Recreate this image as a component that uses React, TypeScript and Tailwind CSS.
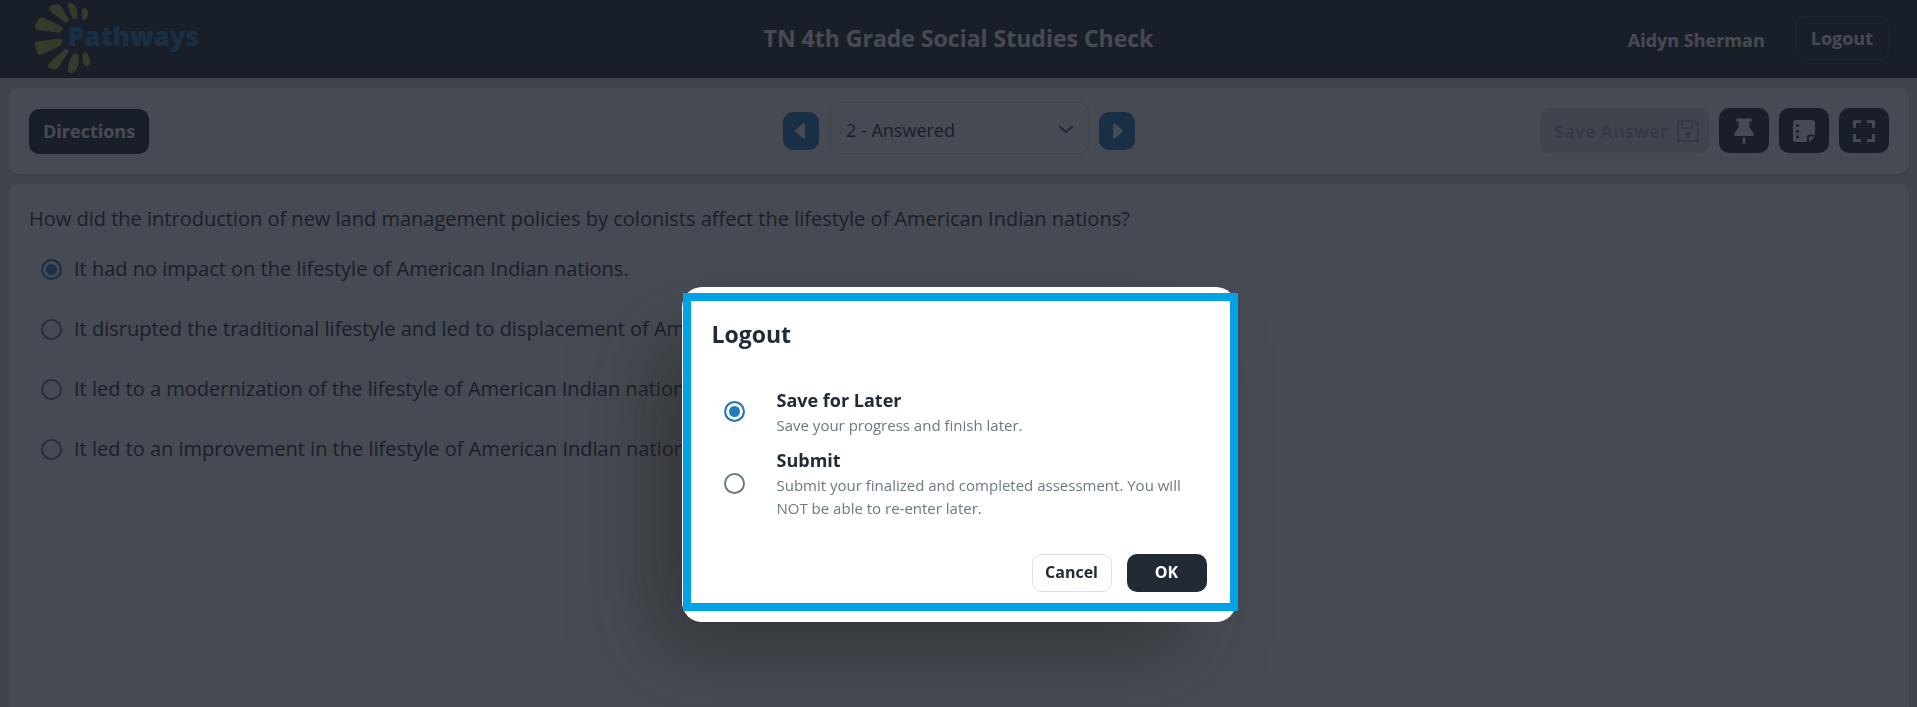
import React, { useState } from 'react';

const answers = [
  'It had no impact on the lifestyle of American Indian nations.',
  'It disrupted the traditional lifestyle and led to displacement of American Indian nations.',
  'It led to a modernization of the lifestyle of American Indian nations.',
  'It led to an improvement in the lifestyle of American Indian nations.',
];

const logoutOptions = [
  { id: 'save', label: 'Save for Later', description: 'Save your progress and finish later.' },
  {
    id: 'submit',
    label: 'Submit',
    description: 'Submit your finalized and completed assessment. You will NOT be able to re-enter later.',
  },
];

const radioClass =
  'size-[21px] shrink-0 appearance-none rounded-full border-2 border-[#6b7885] bg-white shadow-[inset_0_0_0_3px_white] checked:border-[#2279bc] checked:bg-[#2279bc]';

const toolClass = 'flex h-[45px] w-[50px] items-center justify-center rounded-[10px] bg-[#222b35] text-white';

function Logo() {
  return (
    <svg viewBox="34 2 166 72" className="h-[72px] w-[166px]" role="img" aria-label="Pathways">
      <g fill="#a2ba3c" stroke="#a2ba3c" strokeWidth="1" strokeLinejoin="round">
        <path d="M49 9Q50 5 55 5Q59 4 61 7L68 19Q69 23 65 22L52 12Q49 10 49 9z" />
        <path d="M36 25L39 19Q40 17 43 18L60 26Q63 28 62 30Q61 33 57 32L37 29Q35 29 36 25z" />
        <path d="M35 44Q35 42 38 42L59 39Q62 39 62 42Q62 44 59 46L42 54Q39 55 38 53z" />
        <path d="M48 65L64 50Q67 48 68 51Q68 53 66 55L58 67Q56 70 53 69L49 67Q48 66 48 65z" />
        <path d="M68 4Q71 2 74 5Q77 9 77 16Q76 20 73 18Q69 10 68 4z" />
        <path d="M82 10Q84 7 87 10Q89 14 85 20Q82 22 82 10z" />
        <path d="M68 71Q69 62 72 56Q75 52 78 55Q79 65 75 71Q70 74 68 71z" />
        <path d="M83 54Q85 50 87 54L90 61Q90 65 87 66Q82 66 83 54z" />
      </g>
      <text x="68" y="46" fill="#2279bc" fontFamily="Open Sans, sans-serif" fontWeight="800" fontSize="26">
        Pathways
      </text>
    </svg>
  );
}

function Header() {
  return (
    <header className="grid h-[78px] grid-cols-[1fr_auto_1fr] items-center bg-[#222b35] px-7 pb-0.5 text-white">
      <div className="pl-[6px]">
        <Logo />
      </div>
      <h1 className="text-[23px] leading-8 font-bold">TN 4th Grade Social Studies Check</h1>
      <div className="flex items-center justify-end gap-[30px]">
        <span className="pt-1 text-lg font-bold">Aidyn Sherman</span>
        <button className="h-11 rounded-[10px] border border-[#3d4651] px-[15px] text-lg font-bold">Logout</button>
      </div>
    </header>
  );
}

function SaveIcon() {
  return (
    <svg viewBox="0 0 24 24" className="size-6" fill="none" stroke="currentColor" strokeWidth="2">
      <path d="M3 2h14.500l4.500 4.500V21a1 1 0 0 1-1 1H3a1 1 0 0 1-1-1V3a1 1 0 0 1 1-1z" strokeLinejoin="round" />
      <path d="M6 2v7h10V2" />
      <circle cx="12.500" cy="15.500" r="3" fill="currentColor" stroke="none" />
    </svg>
  );
}

function PinIcon() {
  return (
    <svg viewBox="0 0 20 26" className="h-[26px] w-5" fill="currentColor">
      <path d="M3.500 0.500h13a1.500 1.500 0 0 1 0 3H15.500v6l3.500 4.700q2 3.800-1 3.800H2q-3 0-1-3.800L4.500 9.500v-6h-1a1.500 1.500 0 0 1 0-3z" />
      <path d="M8.500 19.500h3v5a1.500 1.500 0 0 1-3 0z" />
    </svg>
  );
}

function NoteIcon() {
  return (
    <svg viewBox="0 0 22 22" className="size-[22px]">
      <path d="M3 0h16a3 3 0 0 1 3 3v11.500h-5a3 3 0 0 0-3 3V22H3a3 3 0 0 1-3-3V3a3 3 0 0 1 3-3z" fill="currentColor" />
      <path d="M16 22v-4a1.500 1.500 0 0 1 1.500-1.500H22z" fill="currentColor" />
      <g fill="#222b35">
        <circle cx="4.500" cy="5.500" r="1.500" />
        <circle cx="4.500" cy="11.300" r="1.500" />
        <circle cx="4.500" cy="17" r="1.500" />
      </g>
    </svg>
  );
}

function FullscreenIcon() {
  return (
    <svg viewBox="0 0 22 22" className="size-[22px]" fill="none" stroke="currentColor" strokeWidth="3" strokeLinejoin="round">
      <path d="M1.500 8V1.500H8M14 1.500h6.500V8M20.500 14v6.500H14M8 20.500H1.500V14" />
    </svg>
  );
}

function Toolbar() {
  const navClass = 'mb-1 flex h-[38px] w-9 items-center justify-center rounded-[10px] bg-[#2279bc] text-white';

  return (
    <section className="grid grid-cols-[1fr_auto_1fr] items-end rounded-[10px] bg-white px-5 pt-[14px] pb-5 shadow-md">
      <div>
        <button className="block h-[45px] rounded-[10px] bg-[#222b35] px-[14px] pb-0.5 text-lg font-bold text-white">Directions</button>
      </div>

      {/* Question navigation */}
      <div className="flex items-end gap-[10px]">
        <button className={navClass} aria-label="Previous question">
          <svg viewBox="0 0 12 16" className="h-4 w-3" fill="currentColor">
            <path d="M8 .7Q10 0 10 2v12q0 2-2 1.300L.7 9Q0 8 .7 7z" />
          </svg>
        </button>
        <div className="relative">
          <select
            aria-label="Question"
            className="block h-[52px] w-[260px] appearance-none rounded-[10px] border border-[#dcdfe4] bg-white pt-1 pr-10 pl-4 text-lg text-[#222b35]"
          >
            <option>2 - Answered</option>
          </select>
          <svg
            viewBox="0 0 14 8"
            className="pointer-events-none absolute top-6 right-4 h-2 w-[14px]"
            fill="none"
            stroke="#4b5563"
            strokeWidth="2"
            strokeLinecap="round"
          >
            <path d="M1 1l6 5 6-5" />
          </svg>
        </div>
        <button className={navClass} aria-label="Next question">
          <svg viewBox="-2 0 12 16" className="h-4 w-3" fill="currentColor">
            <path d="M2 .7Q0 0 0 2v12q0 2 2 1.300L9.300 9Q10 8 9.300 7z" />
          </svg>
        </button>
      </div>

      {/* Tools */}
      <div className="flex justify-end gap-[10px] pb-px">
        <button disabled className="flex h-[45px] items-center gap-2 rounded-[10px] bg-[#e1e3e7] pr-[9px] pl-[14px] text-lg font-bold text-[#a9afbb]">
          Save Answer
          <SaveIcon />
        </button>
        <button className={toolClass} aria-label="Pin">
          <PinIcon />
        </button>
        <button className={toolClass} aria-label="Notes">
          <NoteIcon />
        </button>
        <button className={toolClass} aria-label="Full screen">
          <FullscreenIcon />
        </button>
      </div>
    </section>
  );
}

function Question() {
  const [answer, setAnswer] = useState(0);

  return (
    <section className="flex-1 rounded-t-[10px] bg-white px-5 pt-5 text-xl text-[#222b35] shadow-md">
      <p className="leading-[30px]">How did the introduction of new land management policies by colonists affect the lifestyle of American Indian nations?</p>
      <div className="mt-5 flex flex-col gap-[30px] pl-3">
        {answers.map((text, i) => (
          <label key={text} className="flex items-center gap-3 leading-[30px]">
            <input type="radio" name="answer" checked={answer === i} onChange={() => setAnswer(i)} className={radioClass} />
            {text}
          </label>
        ))}
      </div>
    </section>
  );
}

function LogoutDialog() {
  const [choice, setChoice] = useState('save');

  return (
    <div className="fixed inset-0 flex items-end justify-center bg-[#181d27]/80 pb-[85px]">
      <div
        role="dialog"
        aria-labelledby="logout-title"
        className="relative w-[554px] rounded-[20px] bg-white pt-[31px] pr-[29px] pb-[30px] pl-[30px] text-[#222b35] shadow-[-40px_40px_80px_-16px_rgba(32,33,32,0.5)]"
      >
        {/* Highlight frame */}
        <div className="pointer-events-none absolute top-[6px] -right-[2px] bottom-[11px] left-px border-8 border-[#00a2e8]" />

        <h2 id="logout-title" className="text-[23px] leading-8 font-bold">
          Logout
        </h2>
        <div className="mt-9 flex flex-col gap-[9px] pl-3">
          {logoutOptions.map((option) => (
            <label key={option.id} className="flex items-center gap-8">
              <input
                type="radio"
                name="logout"
                checked={choice === option.id}
                onChange={() => setChoice(option.id)}
                className={radioClass}
              />
              <span>
                <span className="block text-lg leading-7 font-bold">{option.label}</span>
                <span className="block text-[15px] leading-[23px] text-[#6b7885]">{option.description}</span>
              </span>
            </label>
          ))}
        </div>
        <div className="mt-[34px] flex justify-end gap-[15px]">
          <button className="h-[38px] w-20 rounded-[10px] border border-[#dcdfe4] pb-0.5 text-base font-bold">Cancel</button>
          <button className="h-[38px] w-20 rounded-[10px] bg-[#222b35] pb-0.5 text-base font-bold text-white">OK</button>
        </div>
      </div>
    </div>
  );
}

export default function App() {
  return (
    <div className="flex min-h-screen flex-col bg-[#e1e3e7] font-['Open_Sans',sans-serif]">
      <Header />
      <main className="flex flex-1 flex-col gap-[10px] pt-[10px] pr-2 pl-[9px]">
        <Toolbar />
        <Question />
      </main>
      <LogoutDialog />
    </div>
  );
}
